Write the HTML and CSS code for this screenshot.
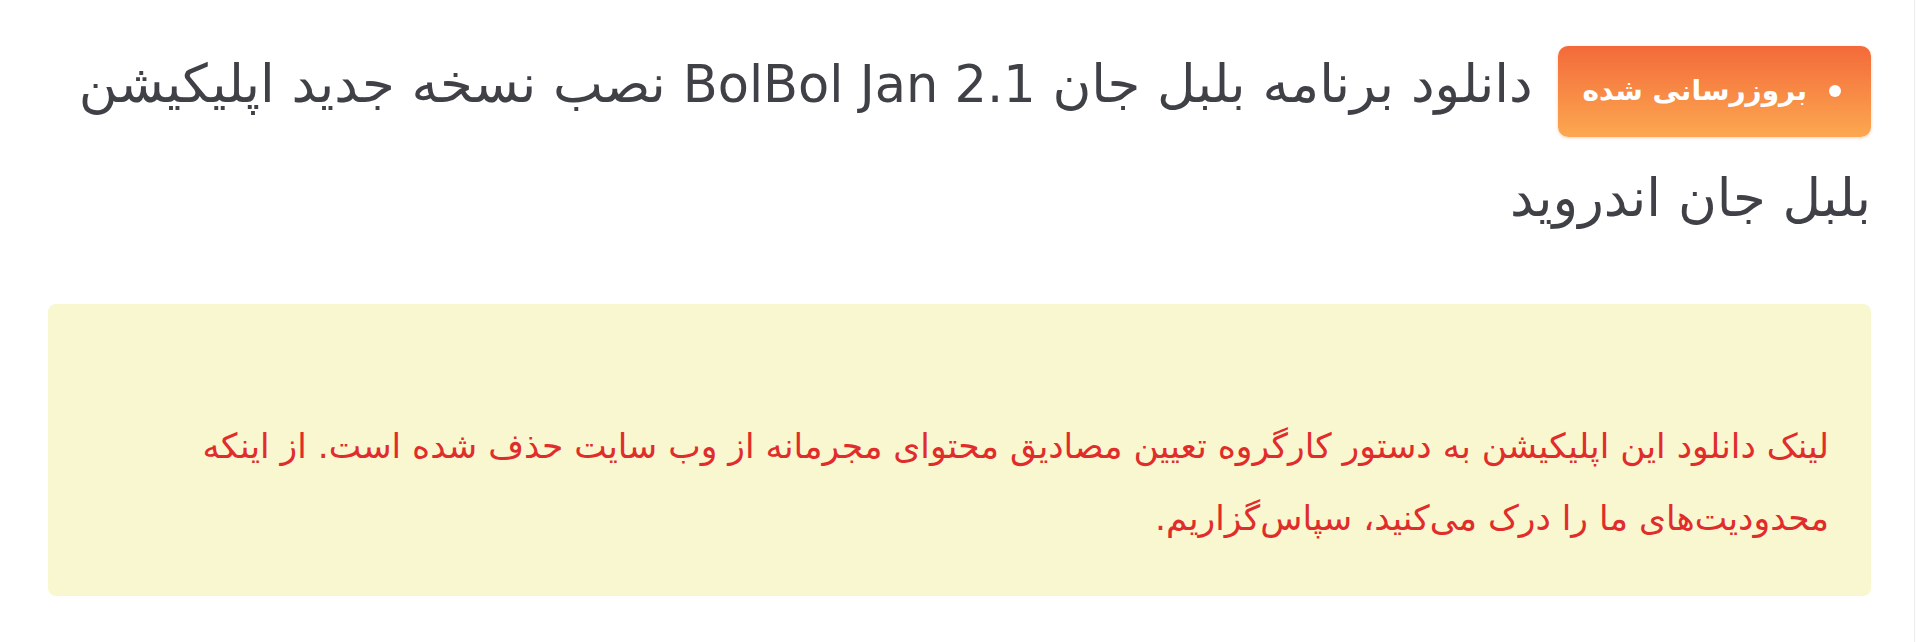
FILE: index.html
```html
<!DOCTYPE html>
<html lang="fa" dir="rtl">
<head>
<meta charset="utf-8">
<title>بلبل جان</title>
<link rel="stylesheet" href="styles.css">
</head>
<body>
<div class="card">
  <h1 class="title"><span class="badge"><span class="dot"></span>بروزرسانی شده</span>دانلود برنامه بلبل جان <span class="latin">BolBol Jan 2.1</span> نصب نسخه جدید اپلیکیشن بلبل جان اندروید</h1>
  <div class="notice">
    <p class="empty"></p>
    <p class="msg">لینک دانلود این اپلیکیشن به دستور کارگروه تعیین مصادیق محتوای مجرمانه از وب سایت حذف شده است. از اینکه محدودیت‌های ما را درک می‌کنید، سپاس‌گزاریم.</p>
  </div>
</div>
</body>
</html>
```

FILE: styles.css
```css
html, body {
  margin: 0;
  padding: 0;
  background: #ffffff;
}
body {
  font-family: "DejaVu Sans", sans-serif;
  direction: rtl;
  height: 642px;
  overflow: hidden;
}
.card {
  margin: 0 5px 0 0;
  border-right: 1px solid #ececec;
  border-radius: 0 0 10px 10px;
  padding: 27px 43px 40px 48px;
  min-height: 700px;
  box-sizing: border-box;
}
.title {
  margin: 0;
  font-family: "DejaVu Sans", sans-serif;
  font-weight: 400;
  font-size: 53px;
  line-height: 114px;
  color: #3f4147;
}
.latin {
  font-size: 51px;
  line-height: 1;
}
.badge {
  display: inline-flex;
  align-items: center;
  gap: 22px;
  height: 91px;
  padding: 0 30px 0 25px;
  margin: 8px 0 0 25px;
  box-sizing: border-box;
  vertical-align: middle;
  border-radius: 10px;
  background: linear-gradient(to bottom, #f36a3a, #fca850);
  box-shadow: 0 1px 3px rgba(240, 120, 60, 0.35);
  color: #ffffff;
  font-family: "DejaVu Sans", sans-serif;
  font-size: 28px;
  font-weight: 700;
  line-height: 1;
}
.dot {
  width: 12px;
  height: 12px;
  border-radius: 50%;
  background: #ffffff;
  flex: none;
}
.notice {
  margin-top: 49px;
  background: #f8f7d0;
  border-radius: 8px;
  padding: 42px 42px 42px 28px;
}
.notice p {
  margin: 0;
}
.empty {
  height: 64px;
}
.msg {
  color: #e02d2b;
  font-size: 34.5px;
  line-height: 72px;
}
```
